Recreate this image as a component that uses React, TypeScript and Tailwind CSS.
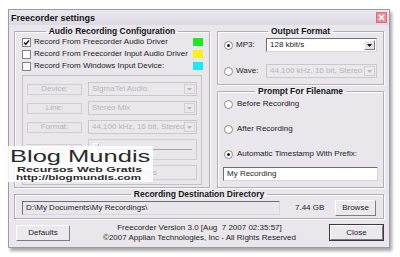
import React from 'react';

function Check({ checked }: { checked?: boolean }) {
  return (
    <span className="flex h-[9px] w-[9px] shrink-0 items-center justify-center border border-[#858189] bg-white">
      {checked && (
        <svg width="7" height="7" viewBox="0 0 7 7">
          <path d="M1 3.4 L2.8 5.3 L6 1.4" stroke="#1e1e1e" strokeWidth="1.5" fill="none" />
        </svg>
      )}
    </span>
  );
}

function Radio({ checked }: { checked?: boolean }) {
  return (
    <span className="flex h-[9px] w-[9px] shrink-0 items-center justify-center rounded-full border border-[#8d8991] bg-white">
      {checked && <span className="h-[3px] w-[3px] rounded-full bg-[#1e1e1e]" />}
    </span>
  );
}

function Arrow({ disabled }: { disabled?: boolean }) {
  return (
    <span
      className={`mr-[1px] flex h-[10px] w-[11px] shrink-0 items-center justify-center border ${
        disabled ? 'border-[#d4cfd3] bg-[#ece9ee]' : 'border-t-white border-l-white border-b-[#7e7a84] border-r-[#7e7a84] bg-[#e6e3ea]'
      }`}
    >
      <svg width="5" height="3" viewBox="0 0 5 3">
        <path d="M0 0 H5 L2.5 3 Z" fill={disabled ? '#bdb5ba' : '#111'} />
      </svg>
    </span>
  );
}

function Combo({ text, disabled, className }: { text: string; disabled?: boolean; className?: string }) {
  return (
    <div
      className={`flex h-[14px] items-center border ${
        disabled
          ? 'border-[#cdc6cb] bg-[#ebe8ed] text-[#bbb2b7]'
          : 'border-t-[#6f6c75] border-l-[#6f6c75] border-b-[#d8d5dc] border-r-[#d8d5dc] bg-white text-[#1c1c1c]'
      } ${className ?? ''}`}
    >
      <span className="min-w-0 flex-1 overflow-hidden whitespace-nowrap pl-[3px] leading-[12px]">{text}</span>
      <Arrow disabled={disabled} />
    </div>
  );
}

function LabelBox({ text }: { text: string }) {
  return (
    <div className="flex h-[11px] w-[55px] shrink-0 items-center justify-center border border-[#d3cdd1] text-[#bbb2b7]">
      {text}
    </div>
  );
}

function Button({ text, def, className }: { text: string; def?: boolean; className?: string }) {
  return (
    <div className={`${def ? 'border border-[#3a383e]' : ''} ${className ?? ''}`}>
      <div className="flex h-full w-full items-center justify-center border border-t-white border-l-white border-b-[#7f7b85] border-r-[#7f7b85] bg-[#ebe8ee] text-[#1c1c1c]">
        {text}
      </div>
    </div>
  );
}

function Group({ title, className, children }: { title: string; className?: string; children: React.ReactNode }) {
  return (
    <fieldset className={`border border-[#b3afb7] shadow-[inset_1px_1px_0_#fbfbfd,1px_1px_0_#fbfbfd] ${className ?? ''}`}>
      <legend className="mx-auto px-[3px] text-[8.5px] font-bold leading-[10px] text-[#151515]">{title}</legend>
      {children}
    </fieldset>
  );
}

function CheckRow({ checked, text, swatch }: { checked?: boolean; text: string; swatch: string }) {
  return (
    <div className="flex h-[12px] items-center">
      <Check checked={checked} />
      <span className="ml-[3px] min-w-0 flex-1 whitespace-nowrap">{text}</span>
      <span className={`mr-[-1px] h-[8px] w-[10px] shrink-0 ${swatch}`} />
    </div>
  );
}

export default function App() {
  return (
    <div className="relative h-[257px] w-[400px] overflow-hidden bg-white pl-[8px] pt-[9px] font-[family-name:Liberation_Sans,Arial,sans-serif] text-[8px] text-[#1c1c1c]">
      <div className="w-[382px] border border-[#9d9aa4] bg-[#e9e6ec] shadow-[2px_3px_3px_rgba(0,0,0,0.35)]">
        {/* title bar */}
        <div className="flex h-[15px] items-center justify-between bg-gradient-to-b from-[#eae8ef] to-[#dcd9e2] pl-[2px] pr-[2px]">
          <span className="text-[9px] font-bold leading-[10px] text-[#141414]">Freecorder settings</span>
          <span className="flex h-[11px] w-[11px] items-center justify-center border border-[#d46e78] bg-[#ee8e96]">
            <svg width="7" height="7" viewBox="0 0 7 7">
              <path d="M1 1 L6 6 M6 1 L1 6" stroke="#fff" strokeWidth="1.6" />
            </svg>
          </span>
        </div>

        <div className="px-[5px] pt-[1px]">
          <div className="flex gap-[7px]">
            {/* left group */}
            <Group title="Audio Recording Configuration" className="h-[162px] w-[195px] px-[7px] pb-[4px]">
              <div className="flex flex-col">
                <CheckRow checked text="Record From Freecorder Audio Driver" swatch="bg-[#22e61e]" />
                <CheckRow text="Record From Freecorder Input Audio Driver" swatch="bg-[#f5f01a]" />
                <CheckRow text="Record From Windows Input Device:" swatch="bg-[#1fe8f2]" />
              </div>
              <div className="mt-[3px] flex w-[180px] flex-col gap-[5px] border border-[#c4c0c8] px-[4px] pt-[6px] pb-[4px]">
                <div className="flex items-center gap-[6px]">
                  <LabelBox text="Device:" />
                  <Combo text="SigmaTel Audio" disabled className="w-[109px]" />
                </div>
                <div className="flex items-center gap-[6px]">
                  <LabelBox text="Line:" />
                  <Combo text="Stereo Mix" disabled className="w-[109px]" />
                </div>
                <div className="flex items-center gap-[6px]">
                  <LabelBox text="Format:" />
                  <Combo text="44.100 kHz, 16 bit, Stereo" disabled className="w-[109px]" />
                </div>
                <div className="flex h-[21px] items-center gap-[6px]">
                  <LabelBox text="Amplify:" />
                  <div className="flex h-[21px] w-[112px] items-center border border-[#d3cdd1] pl-[4px] pr-[4px]">
                    <span className="h-[14px] w-[6px] shrink-0 border border-t-white border-l-white border-b-[#b9b3b8] border-r-[#b9b3b8] bg-[#ebe8ed]" />
                    <span className="h-[2px] flex-1 border-t border-[#a9a3a8] border-b-white" />
                  </div>
                </div>
                <div className="flex h-[15px] items-center">
                  <div className="ml-[61px] flex h-[15px] w-[109px] items-center justify-center border border-[#d3cdd1] text-[#bbb2b7]">
                    Settings
                  </div>
                </div>
              </div>
            </Group>

            {/* right column */}
            <div className="flex w-[168px] flex-col gap-[1px]">
              <Group title="Output Format" className="h-[59px] px-[6px]">
                <div className="flex flex-col gap-[12px] pt-[2px]">
                  <div className="flex h-[14px] items-center">
                    <Radio checked />
                    <span className="ml-[3px] w-[30px]">MP3:</span>
                    <Combo text="128 kbit/s" className="ml-auto w-[111px]" />
                  </div>
                  <div className="flex h-[14px] items-center">
                    <Radio />
                    <span className="ml-[3px] w-[30px]">Wave:</span>
                    <Combo text="44.100 kHz, 16 bit, Stereo" disabled className="ml-auto w-[111px]" />
                  </div>
                </div>
              </Group>
              <Group title="Prompt For Filename" className="h-[102px] px-[5px]">
                <div className="flex flex-col pt-[3px]">
                  <div className="flex h-[10px] items-center gap-[4px] pl-[1px]">
                    <Radio />
                    <span>Before Recording</span>
                  </div>
                  <div className="mt-[15px] flex h-[10px] items-center gap-[4px] pl-[1px]">
                    <Radio />
                    <span>After Recording</span>
                  </div>
                  <div className="mt-[15px] flex h-[10px] items-center gap-[4px] pl-[1px]">
                    <Radio checked />
                    <span>Automatic Timestamp With Prefix:</span>
                  </div>
                  <div className="mt-[8px] flex h-[14px] items-center border border-t-[#6f6c75] border-l-[#6f6c75] border-b-[#d8d5dc] border-r-[#d8d5dc] bg-white pl-[3px]">
                    My Recording
                  </div>
                </div>
              </Group>
            </div>
          </div>

          {/* destination */}
          <Group title="Recording Destination Directory" className="mt-[1px] h-[30px] px-[7px]">
            <div className="flex h-[17px] items-center">
              <div className="flex h-[14px] w-[258px] items-center border border-t-[#6f6c75] border-l-[#6f6c75] border-b-[#d8d5dc] border-r-[#d8d5dc] pl-[3px]">
                D:\My Documents\My Recordings\
              </div>
              <span className="ml-[15px]">7.44 GB</span>
              <Button text="Browse" className="ml-auto h-[16px] w-[41px]" />
            </div>
          </Group>

          {/* bottom */}
          <div className="flex h-[28px] items-center pb-[1px]">
            <Button text="Defaults" className="ml-[2px] h-[16px] w-[54px]" />
            <div className="flex flex-1 flex-col items-center leading-[10px]">
              <span>Freecorder Version 3.0 [Aug&nbsp;&nbsp;7 2007 02:35:57]</span>
              <span>©2007 Applian Technologies, Inc - All Rights Reserved</span>
            </div>
            <Button text="Close" def className="h-[17px] w-[55px]" />
          </div>
        </div>
      </div>

      {/* watermark */}
      <div className="absolute left-[8px] top-[146px] h-[36px] w-[145px] bg-white/85 text-[#2b2b2b]">
        <div className="ml-[2px] mt-[2px] origin-left scale-x-[1.5] text-[17px] leading-[17px] whitespace-nowrap">Blog Mundis</div>
        <div className="ml-[9px] origin-left scale-x-[1.55] text-[8px] font-semibold leading-[9px] whitespace-nowrap">Recursos Web Gratis</div>
        <div className="ml-[8px] origin-left scale-x-[1.45] text-[8px] font-semibold leading-[8px] whitespace-nowrap">http://blogmundis.com</div>
      </div>
    </div>
  );
}
